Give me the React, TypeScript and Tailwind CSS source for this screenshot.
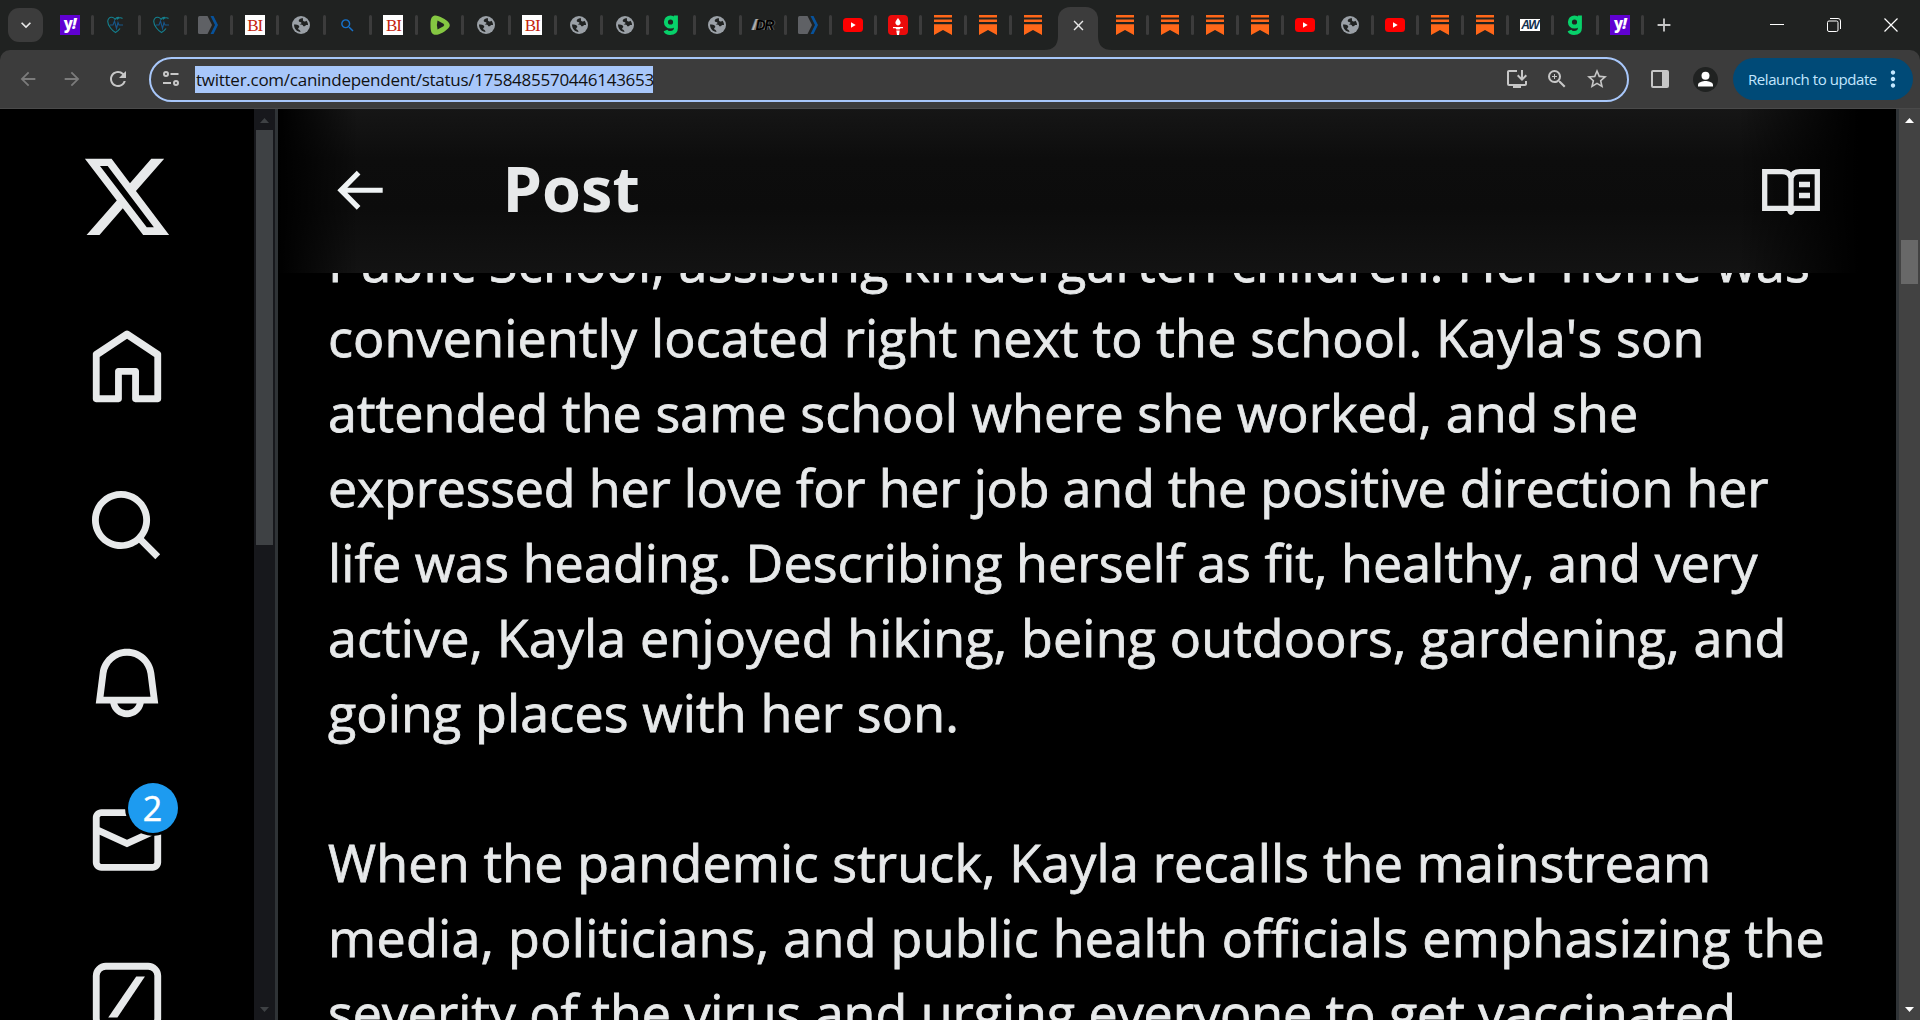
import React from 'react';
import { MdArrowBack, MdArrowForward, MdRefresh, MdOutlineInstallDesktop, MdZoomIn, MdStarOutline, MdMoreVert, MdAdd, MdKeyboardArrowDown, MdClose, MdSearch } from 'react-icons/md';

type Favicon = 'yahoo' | 'heart' | 'tag' | 'bi' | 'globe' | 'search' | 'rumble' | 'g' | 'dr' | 'youtube' | 'torch' | 'substack' | 'aw';

const wideTabs: Favicon[] = [
  'yahoo', 'heart', 'heart', 'tag', 'bi', 'globe', 'search', 'bi',
  'rumble', 'globe', 'bi', 'globe', 'globe', 'g', 'globe',
];
const tabsBefore: Favicon[] = ['dr', 'tag', 'youtube', 'torch', 'substack', 'substack', 'substack'];
const tabsAfter: Favicon[] = [
  'substack', 'substack', 'substack', 'substack', 'youtube', 'globe',
  'youtube', 'substack', 'substack', 'aw', 'g', 'yahoo',
];

const lines = [
  { text: 'Public School, assisting kindergarten children. Her home was', tracking: 'tracking-[0.200px]' },
  { text: "conveniently located right next to the school. Kayla's son", tracking: 'tracking-[0.180px]' },
  { text: 'attended the same school where she worked, and she', tracking: 'tracking-[0.070px]' },
  { text: 'expressed her love for her job and the positive direction her', tracking: 'tracking-[-0.200px]' },
  { text: 'life was heading. Describing herself as fit, healthy, and very', tracking: 'tracking-[0.080px]' },
  { text: 'active, Kayla enjoyed hiking, being outdoors, gardening, and', tracking: 'tracking-[0.150px]' },
  { text: 'going places with her son.', tracking: 'tracking-[0.140px]' },
  { text: '', tracking: '' },
  { text: 'When the pandemic struck, Kayla recalls the mainstream', tracking: 'tracking-[0.180px]' },
  { text: 'media, politicians, and public health officials emphasizing the', tracking: 'tracking-[0.280px]' },
  { text: 'severity of the virus and urging everyone to get vaccinated.', tracking: 'tracking-[-0.040px]' },
];

const TabIcon = ({ name }: { name: Favicon }) => {
  switch (name) {
    case 'yahoo':
      return (
        <div className="flex h-5 w-5 items-center justify-center bg-[#6001d2] pb-1 font-['Open_Sans',sans-serif] text-[15px] leading-none font-extrabold tracking-[-1px] text-white">
          y<span className="italic">!</span>
        </div>
      );
    case 'heart':
      return (
        <svg className="h-5 w-5" viewBox="0 0 20 20" fill="none" strokeWidth="1.1">
          <path d="M13 2.5C11 2 10 3 9 4.300C7.500 2 4.500 1.500 2.800 3.500C.8 6 2.300 10 4.500 13C6 15 7.500 16.500 9.500 17.500C12 16 13 15 14 13.500M11 4.500C12.500 2.500 15 2.300 16.500 3.500" stroke="#14808f" />
          <path d="M4 10H7L8.500 6L10.500 13.500L12 7.500L13 10H17" stroke="#17568a" />
        </svg>
      );
    case 'tag':
      return (
        <svg className="h-5 w-5" viewBox="0 0 20 20">
          <path d="M1.500 1H9.500L14 10L9.500 19H1.500Q0 19 0 17.500V2.500Q0 1 1.500 1Z" fill="#5f6165" />
          <path d="M12.500 1H15.500L20 10L15.500 19H12.500L17 10Z" fill="#07529b" />
        </svg>
      );
    case 'bi':
      return (
        <div className="flex h-5 w-5 items-center justify-center bg-white font-['Liberation_Serif',serif] text-[17px] leading-none tracking-[-1px] text-[#c4240c]">
          BI
        </div>
      );
    case 'globe':
      return (
        <svg className="h-[18px] w-[18px]" viewBox="0 0 18 18">
          <circle cx="9" cy="9" r="9" fill="#9aa0a6" />
          <path d="M10.500 2C8.500 2.300 6.500 3.500 6.700 5C7 6.500 9 5.500 9.500 6.800C9.500 8 8.300 7.800 7.800 8.600C9.500 8.800 11 8.800 11.300 10.200C12.500 10.500 13.500 9.800 14 9C14.700 8.800 15.300 9 16 9C16 7.300 15.500 6 14.500 4.800C13.500 6 11.500 5.500 11 4.500C10.700 3.500 11.500 3 10.500 2Z" fill="#202221" />
          <path d="M2 8.500C4 8.500 6.500 8.500 7.300 10.500C7.500 11.800 6 11.500 6.200 12.800C6.500 14 8.200 13.500 8.500 16C5 15.800 2 12.700 2 8.500Z" fill="#202221" />
        </svg>
      );
    case 'search':
      return <MdSearch className="h-[17px] w-[17px] text-[#1672cc]" />;
    case 'rumble':
      return (
        <svg className="h-5 w-5" viewBox="0 0 20 20">
          <path d="M4 .8C7 -.5 16 4 19 8C20.300 10 19.800 11.500 18.500 13C15 17 9 20.300 4.500 19.700C1 19 .5 15 .5 10C.5 5 1 2 4 .8Z" fill="#85c742" />
          <path d="M7.500 5.500L13.500 8.700Q15 10 13.500 11.300L7.500 14.500Q6.300 10 7.500 5.500Z" fill="#202221" />
        </svg>
      );
    case 'g':
      return (
        <svg className="h-5 w-5" viewBox="0 0 20 20" fill="none" stroke="#07d16a">
          <circle cx="9.500" cy="7" r="4.600" strokeWidth="4" />
          <path d="M14.900 .5V13Q14.900 18 9 18Q5.500 18 4.500 15.500" strokeWidth="4" />
        </svg>
      );
    case 'dr':
      return (
        <div className="flex h-5 w-5 items-center justify-center font-['Liberation_Sans',sans-serif] text-[14px] leading-none font-bold tracking-[-1.2px] text-black italic [text-shadow:-1px_0_#8a8a8a,1px_0_#555]">
          <span className="text-[#b8b8b8]">/</span>DR
        </div>
      );
    case 'youtube':
      return (
        <svg className="h-5 w-5" viewBox="0 0 20 20">
          <rect y="3" width="20" height="14" rx="3.500" fill="#f00" />
          <path d="M8 7.200V12.800L12.700 10Z" fill="#fff" />
        </svg>
      );
    case 'torch':
      return (
        <svg className="h-5 w-5" viewBox="0 0 20 20">
          <rect width="20" height="20" rx="4" fill="#ea0b0b" />
          <path d="M10 3C12 5.500 13 7 12.500 8.500Q11.500 10.500 10 10.500Q8.500 10.500 7.500 8.500C7 7 8 5.500 10 3ZM5 12H15V13.300H12.500L11.500 14.500H8.500L7.500 13.300H5ZM8.300 15.500H11.700L11 20H9Z" fill="#fff" />
        </svg>
      );
    case 'substack':
      return (
        <svg className="h-5 w-[18px]" viewBox="0 0 18 20" fill="#ff6719">
          <path d="M0 0H18V2.500H0ZM0 4.600H18V7H0ZM0 9.200H18V20L9 15L0 20Z" />
        </svg>
      );
    case 'aw':
      return (
        <div className="flex h-3 w-5 items-center justify-center bg-white font-['Liberation_Sans',sans-serif] text-[12px] leading-none font-bold tracking-[-1px] text-[#12304f] italic">
          AW
        </div>
      );
  }
};

const Tab = ({ name, wide, last }: { name: Favicon; wide?: boolean; last?: boolean }) => (
  <div className="flex h-[50px] shrink-0 items-center">
    <div className={`flex shrink-0 items-center justify-center ${wide ? 'w-[43.28px]' : 'w-[42px]'}`}>
      <TabIcon name={name} />
    </div>
    {!last && <div className="h-5 w-[3px] rounded-full bg-[#3c3c3c]" />}
  </div>
);

const TabStrip = () => (
  <div className="flex h-[50px] shrink-0 items-center bg-[#202221] pl-2">
    <button className="mr-[5px] flex h-[34px] w-[35px] items-center justify-center rounded-[11px] bg-[#3c3c3c]">
      <MdKeyboardArrowDown className="h-5 w-5 text-[#e8e8e8]" />
    </button>
    {wideTabs.map((name, i) => <Tab key={i} name={name} wide />)}
    {tabsBefore.map((name, i) => <Tab key={i} name={name} last={i === tabsBefore.length - 1} />)}

    {/* Active tab */}
    <div className="relative mr-[5.500px] ml-[4.500px] flex h-[43px] w-10 shrink-0 items-center justify-center self-end rounded-t-xl bg-[#3c3c3c] pb-[7px]">
      <svg className="absolute bottom-0 -left-3.5 h-3.5 w-3.5" viewBox="0 0 14 14"><path d="M14 0V14H0Q14 14 14 0Z" fill="#3c3c3c" /></svg>
      <MdClose className="h-[17px] w-[17px] text-[#e8e8e8]" />
      <svg className="absolute -right-3.5 bottom-0 h-3.5 w-3.5" viewBox="0 0 14 14"><path d="M0 0V14H14Q0 14 0 0Z" fill="#3c3c3c" /></svg>
    </div>

    {tabsAfter.map((name, i) => <Tab key={i} name={name} />)}
    <MdAdd className="ml-[9px] h-[22px] w-[22px] shrink-0 text-[#c7c7c7]" />

    {/* Window controls */}
    <div className="mr-[22px] ml-auto flex items-center gap-[43px] text-white">
      <svg className="h-[14px] w-[14px]" viewBox="0 0 14 14"><path d="M0 6.500H14" stroke="currentColor" /></svg>
      <svg className="h-[14px] w-[14px]" viewBox="0 0 14 14" fill="none" stroke="currentColor">
        <rect x=".5" y="3" width="10.500" height="10.500" rx="1.500" />
        <path d="M3 .5H11Q13.500 .5 13.500 3V11" />
      </svg>
      <svg className="h-[14px] w-[14px]" viewBox="0 0 14 14"><path d="M.5 .5L13.500 13.500M13.500 .5L.5 13.500" stroke="currentColor" strokeWidth="1.200" /></svg>
    </div>
  </div>
);

const Toolbar = () => (
  <div className="bg-[#202221]">
    <div className="flex h-[59px] items-center rounded-t-[10px] border-b border-[#4a4a4a] bg-[#3c3c3c] text-[#c7c7c7]">
      <MdArrowBack className="ml-[17px] h-[22px] w-[22px] text-[#7b7b7b]" />
      <MdArrowForward className="ml-[22px] h-[22px] w-[22px] text-[#7b7b7b]" />
      <MdRefresh className="ml-[23px] h-6 w-6" />
      <div className="ml-[19px] flex h-[45px] w-[1480px] items-center rounded-full border-[2.5px] border-[#a8c7fa] pr-[18px] pl-3">
        <svg className="h-4 w-4" viewBox="0 0 16 16" fill="none" stroke="currentColor" strokeWidth="2">
          <circle cx="3" cy="3" r="2" /><path d="M7.500 3H15.500M0 12H8" /><circle cx="13" cy="12" r="2" />
        </svg>
        <span className="ml-4 h-[27px] w-[458px] bg-[#a8c7fa] pl-px font-['Open_Sans',sans-serif] text-[17px] leading-[27px] tracking-[-0.260px] whitespace-nowrap text-[#111]">
          twitter.com/canindependent/status/1758485570446143653
        </span>
        <MdOutlineInstallDesktop className="ml-auto h-6 w-6" />
        <MdZoomIn className="ml-4 h-6 w-6" />
        <MdStarOutline className="ml-4 h-6 w-6" />
      </div>
      <svg className="ml-[22px] h-[18px] w-[18px]" viewBox="0 0 18 18">
        <rect x="1" y="1" width="16" height="16" rx="1" fill="none" stroke="currentColor" strokeWidth="2" />
        <path d="M11 1H17V17H11Z" fill="currentColor" />
      </svg>
      <svg className="ml-6 h-[25px] w-[25px]" viewBox="0 0 25 25">
        <circle cx="12.500" cy="12.500" r="12.500" fill="#202221" />
        <circle cx="12.500" cy="8.800" r="4" fill="#fff" />
        <path d="M5 19.500V18C5 15 10 14 12.500 14S20 15 20 18V19.500Z" fill="#fff" />
      </svg>
      <div className="ml-[15px] flex h-[42px] w-[180px] items-center rounded-full bg-[#004a77] pl-[15px] font-['Open_Sans',sans-serif] text-[15px] tracking-[-0.420px] whitespace-nowrap text-[#c2e7ff]">
        Relaunch to update
        <MdMoreVert className="ml-[3px] h-[26px] w-[26px] shrink-0" />
      </div>
    </div>
  </div>
);

const NavIcon = ({ d }: { d: string }) => (
  <svg className="h-[82px] w-[82px]" viewBox="0 0 24 24" fill="#e7e9ea"><path d={d} /></svg>
);

const Sidebar = () => (
  <nav className="flex h-[911px] w-[254px] shrink-0 flex-col items-center overflow-hidden pt-[41px]">
    <svg className="mb-[83.600px] h-[93.750px] w-[93.750px] shrink-0" viewBox="0 0 24 24" fill="#e7e9ea">
      <path d="M18.244 2.25h3.308l-7.227 8.26 8.502 11.24H16.17l-5.214-6.817L4.99 21.75H1.68l7.73-8.835L1.254 2.25H8.08l4.713 6.231zm-1.161 17.52h1.833L7.084 4.126H5.117z" />
    </svg>
    <div className="flex shrink-0 flex-col gap-[75.200px]">
      <NavIcon d="M21.591 7.146L12.52 1.157c-.316-.21-.724-.21-1.04 0l-9.071 5.99c-.26.173-.409.456-.409.757v13.183c0 .502.418.913.929.913h6.638c.511 0 .929-.41.929-.913v-7.075h3.008v7.075c0 .502.418.913.929.913h6.639c.51 0 .928-.41.928-.913V7.904c0-.301-.158-.584-.408-.758zM20 20l-4.5.01.011-7.097c0-.502-.418-.913-.928-.913H9.44c-.511 0-.929.41-.929.913L8.5 20H4V8.773l8.011-5.342L20 8.764z" />
      <NavIcon d="M10.25 3.75c-3.59 0-6.5 2.91-6.5 6.5s2.91 6.5 6.5 6.5c1.795 0 3.419-.726 4.596-1.904 1.178-1.177 1.904-2.801 1.904-4.596 0-3.59-2.91-6.5-6.5-6.5zm-8.5 6.5c0-4.694 3.806-8.5 8.5-8.5s8.5 3.806 8.5 8.5c0 1.986-.682 3.815-1.824 5.262l4.781 4.781-1.414 1.414-4.781-4.781c-1.447 1.142-3.276 1.824-5.262 1.824-4.694 0-8.5-3.806-8.5-8.5z" />
      <NavIcon d="M19.993 9.042C19.48 5.017 16.054 2 11.996 2s-7.49 3.021-7.999 7.051L2.866 18H7.1c.463 2.282 2.481 4 4.9 4s4.437-1.718 4.9-4h4.236l-1.143-8.958zM12 20c-1.306 0-2.417-.835-2.829-2h5.658c-.412 1.165-1.523 2-2.829 2zm-6.866-4l.847-6.698C6.364 6.272 8.941 4 11.996 4s5.627 2.268 6.013 5.295L18.864 16H5.134z" />
      <div className="relative">
        <NavIcon d="M1.998 5.5c0-1.381 1.119-2.5 2.5-2.5h15c1.381 0 2.5 1.119 2.5 2.5v13c0 1.381-1.119 2.5-2.5 2.5h-15c-1.381 0-2.5-1.119-2.5-2.5v-13zm2.5-.5c-.276 0-.5.224-.5.5v2.764l8 3.638 8-3.636V5.5c0-.276-.224-.5-.5-.5h-15zm15.5 5.463l-8 3.636-8-3.638V18.5c0 .276.224.5.5.5h15c.276 0 .5-.224.5-.5v-8.037z" />
        <div className="absolute -top-4 left-[42px] flex h-[50px] w-[50px] items-center justify-center rounded-full bg-[#1d9bf0] pr-px font-['Open_Sans',sans-serif] text-[34px] leading-none text-white ring-3 ring-black [-webkit-text-stroke:0.5px]">
          2
        </div>
      </div>
      <svg className="h-[82px] w-[82px]" viewBox="0 0 24 24">
        <rect x="3" y="3" width="18" height="18" rx="2.800" fill="none" stroke="#e7e9ea" strokeWidth="2" />
        <path d="M14.700 6H17.250L9.200 18H6.500Z" fill="#e7e9ea" />
      </svg>
    </div>
  </nav>
);

const App: React.FC = () => {
  return (
    <div className="flex h-[1020px] w-[1920px] flex-col overflow-hidden bg-black">
      <TabStrip />
      <Toolbar />
      <div className="flex h-[911px]">
        <Sidebar />

        {/* Sidebar scrollbar */}
        <div className="flex w-[21px] shrink-0 flex-col items-center bg-[#17181c]">
          <svg className="mt-[9px] mb-[7px] h-[5px] w-[9px] shrink-0" viewBox="0 0 9 5"><path d="M4.500 0L9 5H0Z" fill="#3e4144" /></svg>
          <div className="h-[415px] w-[17px] bg-[#3e4144]" />
          <svg className="mt-auto mb-2 h-[5px] w-[9px] shrink-0" viewBox="0 0 9 5"><path d="M0 0H9L4.500 5Z" fill="#3e4144" /></svg>
        </div>

        <main className="flex w-[1624px] shrink-0 flex-col overflow-hidden border-x-[3px] border-[#2f3336] text-[#e7e9ea]">
          <header className="flex h-[164px] shrink-0 items-center bg-[linear-gradient(to_right,#000_0px,transparent_80px,transparent_1460px,#000_1580px),linear-gradient(#161616_0px,#0d0d0d_50px,#0c0c0c_100px,#131313_164px)] pr-[76px] pb-0.5 pl-[50px]">
            <svg className="h-[62.500px] w-[62.500px]" viewBox="0 0 24 24" fill="#eff3f4">
              <path d="M7.414 13l5.043 5.04-1.414 1.42L3.586 12l7.457-7.46 1.414 1.42L7.414 11H21v2H7.414z" />
            </svg>
            <h2 className="mb-1 ml-28 font-['Open_Sans',sans-serif] text-[63px] leading-[80px] font-bold">Post</h2>
            <svg className="mt-1 ml-auto h-[46px] w-[58px]" viewBox="0 0 58 46" fill="none" stroke="#e7e9ea" strokeWidth="5.300">
              <path d="M29 40V9C28 5 25 2.700 20 2.700H2.700V39.300H55.300V2.700H38C33 2.700 30 5 29 9" />
              <path d="M37 15.500H48M37 26.500H48" />
              <path d="M24 41H34C32 42 32 46 29 46S26 42 24 41Z" fill="#e7e9ea" stroke="none" />
            </svg>
          </header>
          <div className="min-h-0 flex-1 overflow-hidden">
            <article className="-mt-[49px] pl-[50px] font-['Open_Sans',sans-serif] text-[52px] leading-[75px] [-webkit-text-stroke:0.8px]">
              {lines.map((line, i) => (
                <p key={i} className={`h-[75px] whitespace-nowrap ${line.tracking}`}>{line.text}</p>
              ))}
            </article>
          </div>
        </main>

        {/* Page scrollbar */}
        <div className="flex w-[21px] shrink-0 flex-col items-center bg-[#424242]">
          <svg className="mt-[9px] h-[5px] w-[9px] shrink-0" viewBox="0 0 9 5"><path d="M4.500 0L9 5H0Z" fill="#fff" /></svg>
          <div className="mt-[117px] h-11 w-[17px] bg-[#686868]" />
          <svg className="mt-auto mb-2 h-[5px] w-[9px] shrink-0" viewBox="0 0 9 5"><path d="M0 0H9L4.500 5Z" fill="#fff" /></svg>
        </div>
      </div>
    </div>
  );
};

export default App;
